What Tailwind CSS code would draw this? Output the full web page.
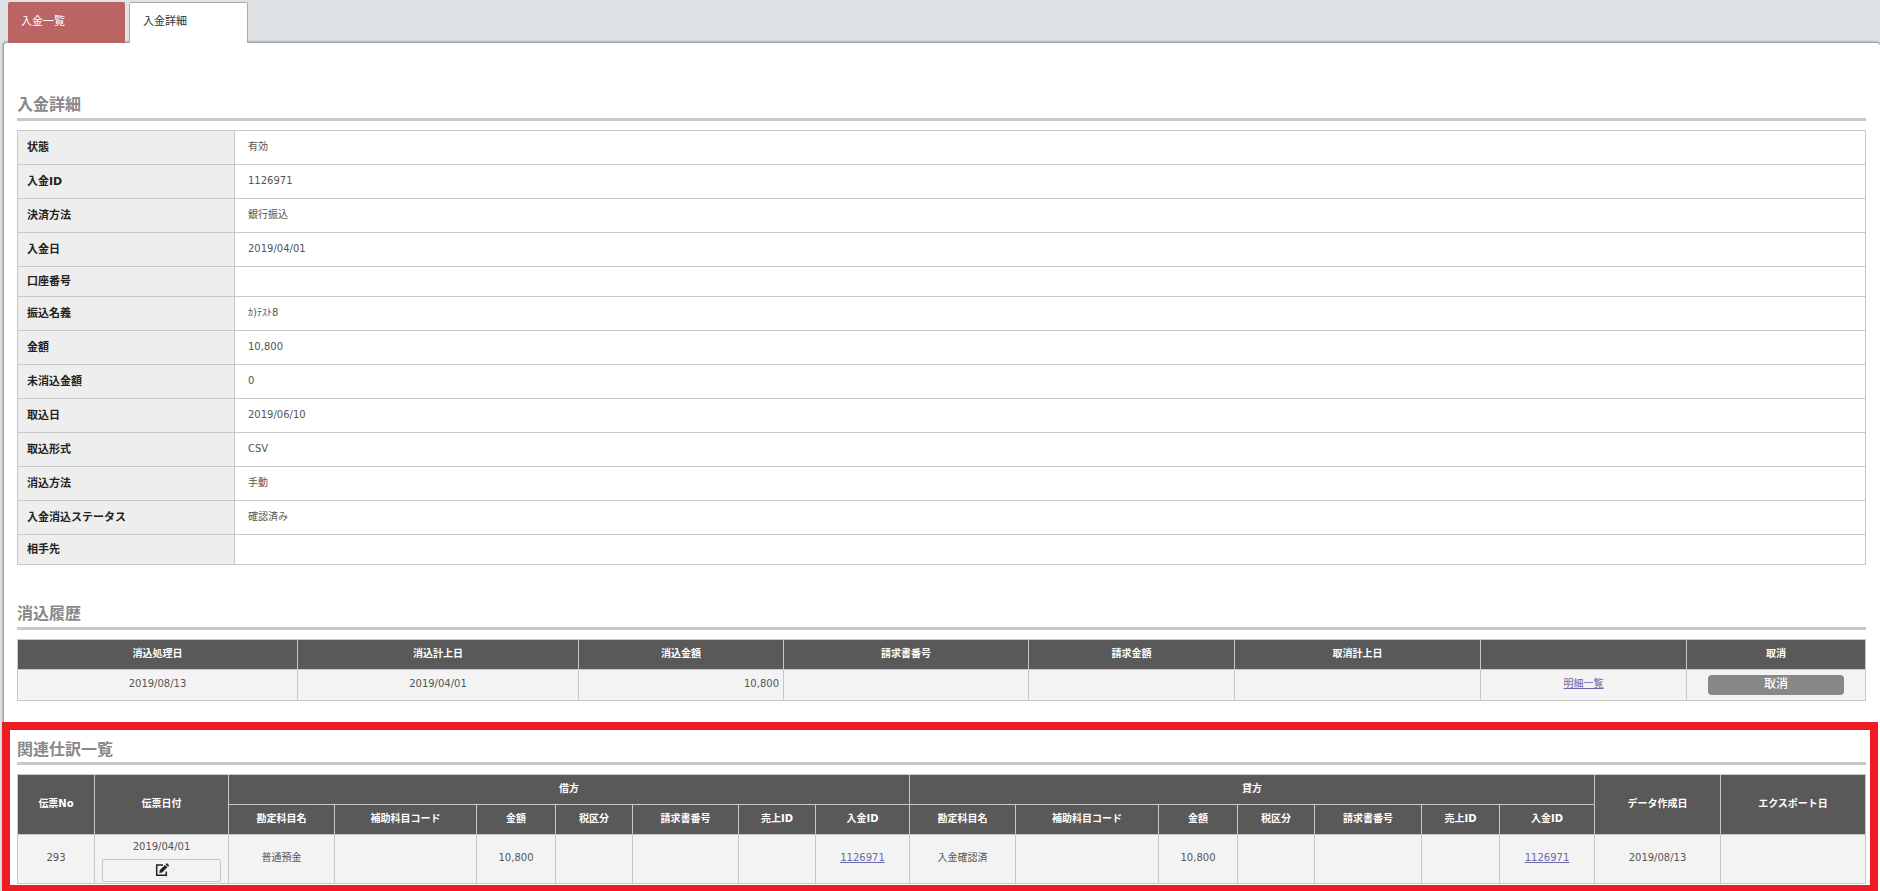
<!DOCTYPE html>
<html lang="ja">
<head>
  <meta charset="UTF-8" />
  <meta name="viewport" content="width=device-width, initial-scale=1.0" />
  <title>入金詳細</title>
  <script src="https://cdn.jsdelivr.net/npm/@tailwindcss/browser@4"></script>
</head>
<body class="bg-[#dfe3e6] text-[#555] text-[10px] leading-4 font-['DejaVu_Sans','Noto_Sans_CJK_JP',sans-serif]">
  <div class="flex flex-col min-h-screen pt-[2px] pl-[3px]">
    <!-- tabs -->
    <nav class="relative z-10 flex gap-1 pl-[5px] -mb-px text-[11px]">
      <a href="#" class="w-[117px] h-[41px] px-[13px] pt-3 rounded-t-xs bg-[#bb6464] text-white">入金一覧</a>
      <a href="#" class="w-[119px] h-[41px] px-[13px] pt-[11px] rounded-t-xs bg-white border border-b-0 border-[#aaa] text-[#333]">入金詳細</a>
    </nav>

    <main class="grow bg-white border-t border-l border-[#a0a3a5] rounded-t-sm shadow-[0_0_3px_#888] pt-[50px]">
      <section class="ml-[13px] mr-[14px]">
        <h2 class="h-[28px] border-b-3 border-[#c8c8c8] text-base leading-6 font-bold text-[#888]">入金詳細</h2>
        <table class="mt-[9px] w-full table-fixed border-collapse [&_th]:border [&_td]:border [&_th]:border-[#c8c8c8] [&_td]:border-[#c8c8c8] [&_th]:bg-[#eee] [&_th]:pl-[9px] [&_td]:pl-[13px] [&_td]:pb-[2px] [&_th]:text-left [&_th]:text-[11px] [&_th]:font-bold [&_th]:text-[#222]">
          <colgroup><col class="w-[217px]" /><col /></colgroup>
          <tbody>
            <tr class="h-[34px]"><th scope="row">状態</th><td>有効</td></tr>
            <tr class="h-[34px]"><th scope="row">入金ID</th><td>1126971</td></tr>
            <tr class="h-[34px]"><th scope="row">決済方法</th><td>銀行振込</td></tr>
            <tr class="h-[34px]"><th scope="row">入金日</th><td>2019/04/01</td></tr>
            <tr class="h-[30px]"><th scope="row">口座番号</th><td></td></tr>
            <tr class="h-[34px]"><th scope="row">振込名義</th><td>ｶ)ﾃｽﾄ8</td></tr>
            <tr class="h-[34px]"><th scope="row">金額</th><td>10,800</td></tr>
            <tr class="h-[34px]"><th scope="row">未消込金額</th><td>0</td></tr>
            <tr class="h-[34px]"><th scope="row">取込日</th><td>2019/06/10</td></tr>
            <tr class="h-[34px]"><th scope="row">取込形式</th><td>CSV</td></tr>
            <tr class="h-[34px]"><th scope="row">消込方法</th><td>手動</td></tr>
            <tr class="h-[34px]"><th scope="row">入金消込ステータス</th><td>確認済み</td></tr>
            <tr class="h-[30px]"><th scope="row">相手先</th><td></td></tr>
          </tbody>
        </table>
      </section>

      <section class="mt-[37px] ml-[13px] mr-[14px]">
        <h2 class="h-[28px] border-b-3 border-[#c8c8c8] text-base leading-6 font-bold text-[#888]">消込履歴</h2>
        <table class="mt-[9px] w-full table-fixed border-collapse text-center [&_th]:border [&_td]:border [&_th]:border-[#c8c8c8] [&_td]:border-[#c8c8c8] [&_th]:bg-[#595959] [&_th]:pb-[2px] [&_td]:pb-[2px] [&_th]:font-bold [&_th]:text-white [&_td]:bg-[#f3f3f3]">
          <colgroup>
            <col class="w-[280px]" /><col class="w-[281px]" /><col class="w-[205px]" /><col class="w-[245px]" />
            <col class="w-[206px]" /><col class="w-[246px]" /><col class="w-[206px]" /><col class="w-[179px]" />
          </colgroup>
          <thead>
            <tr class="h-[30px]">
              <th>消込処理日</th><th>消込計上日</th><th>消込金額</th><th>請求書番号</th>
              <th>請求金額</th><th>取消計上日</th><th></th><th>取消</th>
            </tr>
          </thead>
          <tbody>
            <tr class="h-[31px]">
              <td>2019/08/13</td><td>2019/04/01</td><td class="text-right pr-1">10,800</td><td></td>
              <td></td><td></td><td><a href="#" class="underline text-[#6a6aa8]">明細一覧</a></td>
              <td class="pb-0!"><button type="button" class="block mx-auto w-[136px] h-5 pb-[2px] rounded-sm bg-[#888] text-white text-xs leading-4 font-medium">取消</button></td>
            </tr>
          </tbody>
        </table>
      </section>

      <!-- highlighted section -->
      <section class="mt-[21px] mr-[2px] -ml-[2px] pl-[7px] pr-1 pt-2 pb-px border-8 border-b-6 border-[#ed1c24]">
        <h2 class="h-[27px] border-b-3 border-[#c8c8c8] text-base leading-6 font-bold text-[#888]">関連仕訳一覧</h2>
        <table class="mt-[9px] w-full table-fixed border-collapse text-center [&_th]:border [&_td]:border [&_th]:border-[#c8c8c8] [&_td]:border-[#c8c8c8] [&_th]:bg-[#595959] [&_th]:pb-[2px] [&_td]:pb-[2px] [&_th]:font-bold [&_th]:text-white [&_td]:bg-[#f3f3f3]">
          <colgroup>
            <col class="w-[77px]" /><col class="w-[134px]" />
            <col class="w-[106px]" /><col class="w-[142px]" /><col class="w-[79px]" /><col class="w-[77px]" /><col class="w-[106px]" /><col class="w-[77px]" /><col class="w-[94px]" />
            <col class="w-[106px]" /><col class="w-[143px]" /><col class="w-[79px]" /><col class="w-[77px]" /><col class="w-[107px]" /><col class="w-[78px]" /><col class="w-[95px]" />
            <col class="w-[126px]" /><col class="w-[145px]" />
          </colgroup>
          <thead>
            <tr class="h-[30px]">
              <th rowspan="2">伝票No</th><th rowspan="2">伝票日付</th>
              <th colspan="7">借方</th><th colspan="7">貸方</th>
              <th rowspan="2">データ作成日</th><th rowspan="2">エクスポート日</th>
            </tr>
            <tr class="h-[30px]">
              <th>勘定科目名</th><th>補助科目コード</th><th>金額</th><th>税区分</th><th>請求書番号</th><th>売上ID</th><th>入金ID</th>
              <th>勘定科目名</th><th>補助科目コード</th><th>金額</th><th>税区分</th><th>請求書番号</th><th>売上ID</th><th>入金ID</th>
            </tr>
          </thead>
          <tbody>
            <tr class="h-[49px]">
              <td>293</td>
              <td class="px-[7px] pt-[2px] pb-0!">
                <div class="mb-1">2019/04/01</div>
                <button type="button" aria-label="編集" class="flex w-full h-[23px] items-center justify-center rounded-xs border border-[#c8c8c8] text-[#222]">
                  <svg class="size-[14px]" viewBox="0 0 14 14" fill="none">
                    <path d="M8 2H1.7v10.3h9.6V8.5" stroke="currentColor" stroke-width="1.5" />
                    <path d="M4.3 10l.5-2.9L10 1.9l2.4 2.4-5.2 5.2zM10.6 1.3l.8-.8q.5-.4 1 0l1.4 1.4q.4.5 0 1l-.8.8z" fill="currentColor" />
                  </svg>
                </button>
              </td>
              <td>普通預金</td><td></td><td>10,800</td><td></td><td></td><td></td>
              <td><a href="#" class="underline text-[#6a6aa8]">1126971</a></td>
              <td>入金確認済</td><td></td><td>10,800</td><td></td><td></td><td></td>
              <td><a href="#" class="underline text-[#6a6aa8]">1126971</a></td>
              <td>2019/08/13</td><td></td>
            </tr>
          </tbody>
        </table>
      </section>
    </main>
  </div>
</body>
</html>
